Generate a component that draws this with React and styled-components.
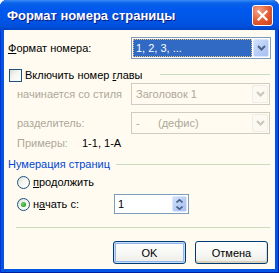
import React from "react";
import styled, { createGlobalStyle } from "styled-components";

const GlobalStyle = createGlobalStyle`
  html, body { margin: 0; padding: 0; background: #ffffff; }
  body { font-family: "Liberation Sans", Arial, sans-serif; font-size: 11px; color: #000; }
`;

const Window = styled.div`
  width: 279px;
  height: 273px;
  display: flex;
  flex-direction: column;
  box-sizing: border-box;
  background: #0055e5;
  border-radius: 7px 7px 0 0;
  overflow: hidden;
  box-shadow: inset 1px 0 0 #0831d9, inset -1px 0 0 #001ea0, inset 0 -1px 0 #001ea0;
`;

const TitleBar = styled.div`
  height: 30px;
  flex: none;
  display: flex;
  align-items: center;
  justify-content: space-between;
  padding: 0 6px 0 7px;
  background: linear-gradient(
    #3a8cf5 0%,
    #0a62e8 10%,
    #0058ee 30%,
    #0055e5 70%,
    #004ed8 90%,
    #0041c0 100%
  );
`;

const Title = styled.div`
  font-size: 13px;
  font-weight: bold;
  color: #fff;
  text-shadow: 1px 1px 0 #0a1883;
  white-space: nowrap;
`;

const CloseBtn = styled.div`
  width: 21px;
  height: 21px;
  box-sizing: border-box;
  border: 1px solid #fff;
  border-radius: 3px;
  background: radial-gradient(circle at 30% 25%, #f3a487 0%, #e2582f 55%, #c8401c 100%);
  display: flex;
  align-items: center;
  justify-content: center;
`;

const Frame = styled.div`
  flex: 1;
  margin: 0 4px 4px;
  background: #fffbf0;
  display: flex;
  flex-direction: column;
`;

const Row = styled.div`
  display: flex;
  align-items: center;
  flex: none;
  height: ${(p) => p.h}px;
  margin-top: ${(p) => p.mt}px;
  padding-left: ${(p) => p.pl || 0}px;
  padding-right: ${(p) => p.pr || 0}px;
  justify-content: ${(p) => p.justify || "flex-start"};
  gap: ${(p) => p.gap || 0}px;
`;

const Label = styled.div`
  width: ${(p) => (p.w ? p.w + "px" : "auto")};
  flex: none;
  color: ${(p) => (p.disabled ? "#aca899" : p.blue ? "#0046d5" : "#000")};
  margin-left: ${(p) => p.ml || 0}px;
  white-space: nowrap;
  line-height: 13px;
`;

const U = styled.span`
  text-decoration: underline;
`;

const Combo = styled.div`
  width: ${(p) => p.w}px;
  height: 22px;
  box-sizing: border-box;
  border: 1px solid ${(p) => (p.disabled ? "#cfcdbf" : "#7f9db9")};
  background: ${(p) => (p.disabled ? "#fffbf0" : "#fff")};
  padding: 1px;
  display: flex;
  align-items: stretch;
  gap: 1px;
`;

const ComboValue = styled.div`
  flex: 1;
  display: flex;
  align-items: center;
  padding-left: 3px;
  box-sizing: border-box;
  white-space: pre;
  color: ${(p) => (p.selected ? "#fff" : p.disabled ? "#aca899" : "#000")};
  background: ${(p) => (p.selected ? "#316ac5" : "transparent")};
  outline: ${(p) => (p.selected ? "1px dotted #e8c070" : "none")};
  outline-offset: -1px;
`;

const DropBtn = styled.div`
  width: 16px;
  flex: none;
  box-sizing: border-box;
  border-radius: 2px;
  border: 1px solid ${(p) => (p.disabled ? "#efeee6" : "#dce7fb")};
  background: ${(p) =>
    p.disabled ? "#fbf9f1" : "linear-gradient(135deg, #d2e0fc, #b4cbf5 60%, #a6c0f2)"};
  display: flex;
  align-items: center;
  justify-content: center;
`;

const Chevron = ({ color }) => (
  <svg width="9" height="6" viewBox="0 0 9 6">
    <polyline points="1,1 4.5,4.5 8,1" fill="none" stroke={color} strokeWidth="2" />
  </svg>
);

const Check = styled.div`
  width: 13px;
  height: 13px;
  flex: none;
  box-sizing: border-box;
  border: 1px solid #1c5180;
  background: linear-gradient(135deg, #d8dad0 0%, #f4f4ef 40%, #ffffff 100%);
`;

const Radio = styled.div`
  width: 13px;
  height: 13px;
  flex: none;
  box-sizing: border-box;
  border-radius: 50%;
  border: 1px solid #1c5180;
  background: linear-gradient(135deg, #d8dad0 0%, #f4f4ef 40%, #ffffff 100%);
  display: flex;
  align-items: center;
  justify-content: center;
  &::after {
    content: "";
    display: ${(p) => (p.checked ? "block" : "none")};
    width: 5px;
    height: 5px;
    border-radius: 50%;
    background: radial-gradient(circle at 40% 40%, #6fd46f, #21a121 70%);
  }
`;

const Line = styled.div`
  flex: 1;
  height: 1px;
  background: #c8dcc0;
  margin-left: ${(p) => p.ml}px;
  margin-right: ${(p) => p.mr}px;
  align-self: ${(p) => (p.top ? "flex-start" : "center")};
  margin-top: ${(p) => p.mt || 0}px;
`;

const Separator = styled.div`
  flex: none;
  height: 1px;
  margin: 13px 5px 0 12px;
  background: #c8dcc0;
`;

const Spinner = styled.div`
  width: 75px;
  height: 20px;
  box-sizing: border-box;
  border: 1px solid #7f9db9;
  background: #fff;
  display: flex;
  align-items: stretch;
  padding: 1px;
`;

const SpinText = styled.div`
  flex: 1;
  display: flex;
  align-items: center;
  padding-left: 2px;
`;

const SpinButtons = styled.div`
  width: 15px;
  flex: none;
  display: flex;
  flex-direction: column;
  gap: 0;
  border-radius: 2px;
  border: 1px solid #dce7fb;
  background: linear-gradient(135deg, #d2e0fc, #b4cbf5 60%, #a6c0f2);
  box-sizing: border-box;
`;

const SpinHalf = styled.div`
  flex: 1;
  display: flex;
  align-items: center;
  justify-content: center;
`;

const Button = styled.div`
  width: 73px;
  height: 23px;
  box-sizing: border-box;
  border: 1px solid #003c74;
  border-radius: 3px;
  background: linear-gradient(#ffffff 0%, #f7f7f4 55%, #ecebe4 100%);
  display: flex;
  align-items: center;
  justify-content: center;
  box-shadow: ${(p) =>
    p.primary
      ? "inset 0 0 0 1px #c4dcfb, inset 0 0 0 2px #93b5ee"
      : "inset 0 -2px 0 #d8d2bd, inset -1px 0 0 #e2dfd2"};
`;

export default function App() {
  return (
    <>
      <GlobalStyle />
      <Window>
        <TitleBar>
          <Title>Формат номера страницы</Title>
          <CloseBtn>
            <svg width="11" height="11" viewBox="0 0 11 11">
              <path d="M1.5 1.5 L9.5 9.5 M9.5 1.5 L1.5 9.5" stroke="#fff" strokeWidth="2.2" strokeLinecap="square" />
            </svg>
          </CloseBtn>
        </TitleBar>
        <Frame>
          <Row h={22} mt={7} pl={4}>
            <Label w={123}>
              <U>Ф</U>ормат номера:
            </Label>
            <Combo w={140}>
              <ComboValue selected>1, 2, 3, ...</ComboValue>
              <DropBtn>
                <Chevron color="#4d6185" />
              </DropBtn>
            </Combo>
          </Row>

          <Row h={13} mt={10} pl={5}>
            <Check />
            <Label ml={3}>
              Включить номер <U>г</U>лавы
            </Label>
            <Line ml={17} mr={5} top mt={5} />
          </Row>

          <Row h={22} mt={1} pl={13}>
            <Label w={114} disabled>
              начинается со стиля
            </Label>
            <Combo w={139} disabled>
              <ComboValue disabled>Заголовок 1</ComboValue>
              <DropBtn disabled>
                <Chevron color="#c9c7ba" />
              </DropBtn>
            </Combo>
          </Row>

          <Row h={22} mt={7} pl={13}>
            <Label w={114} disabled>
              разделитель:
            </Label>
            <Combo w={139} disabled>
              <ComboValue disabled>{"-      (дефис)"}</ComboValue>
              <DropBtn disabled>
                <Chevron color="#c9c7ba" />
              </DropBtn>
            </Combo>
          </Row>

          <Row h={13} mt={3} pl={13}>
            <Label w={65} disabled>
              Примеры:
            </Label>
            <Label>1-1, 1-А</Label>
          </Row>

          <Row h={13} mt={8} pl={4}>
            <Label blue>Нумерация страниц</Label>
            <Line ml={6} mr={5} />
          </Row>

          <Row h={13} mt={5} pl={13}>
            <Radio />
            <Label ml={3}>
              <U>п</U>родолжить
            </Label>
          </Row>

          <Row h={20} mt={5} pl={13}>
            <Radio checked />
            <Label ml={3} w={81}>
              н<U>а</U>чать с:
            </Label>
            <Spinner>
              <SpinText>1</SpinText>
              <SpinButtons>
                <SpinHalf>
                  <svg width="7" height="4" viewBox="0 0 7 4">
                    <polyline points="0.5,3.5 3.5,0.8 6.5,3.5" fill="none" stroke="#4d6185" strokeWidth="1.6" />
                  </svg>
                </SpinHalf>
                <SpinHalf>
                  <svg width="7" height="4" viewBox="0 0 7 4">
                    <polyline points="0.5,0.5 3.5,3.2 6.5,0.5" fill="none" stroke="#4d6185" strokeWidth="1.6" />
                  </svg>
                </SpinHalf>
              </SpinButtons>
            </Spinner>
          </Row>

          <Separator />

          <Row h={23} mt={13} pr={7} justify="flex-end" gap={9}>
            <Button primary>OK</Button>
            <Button>Отмена</Button>
          </Row>
        </Frame>
      </Window>
    </>
  );
}
